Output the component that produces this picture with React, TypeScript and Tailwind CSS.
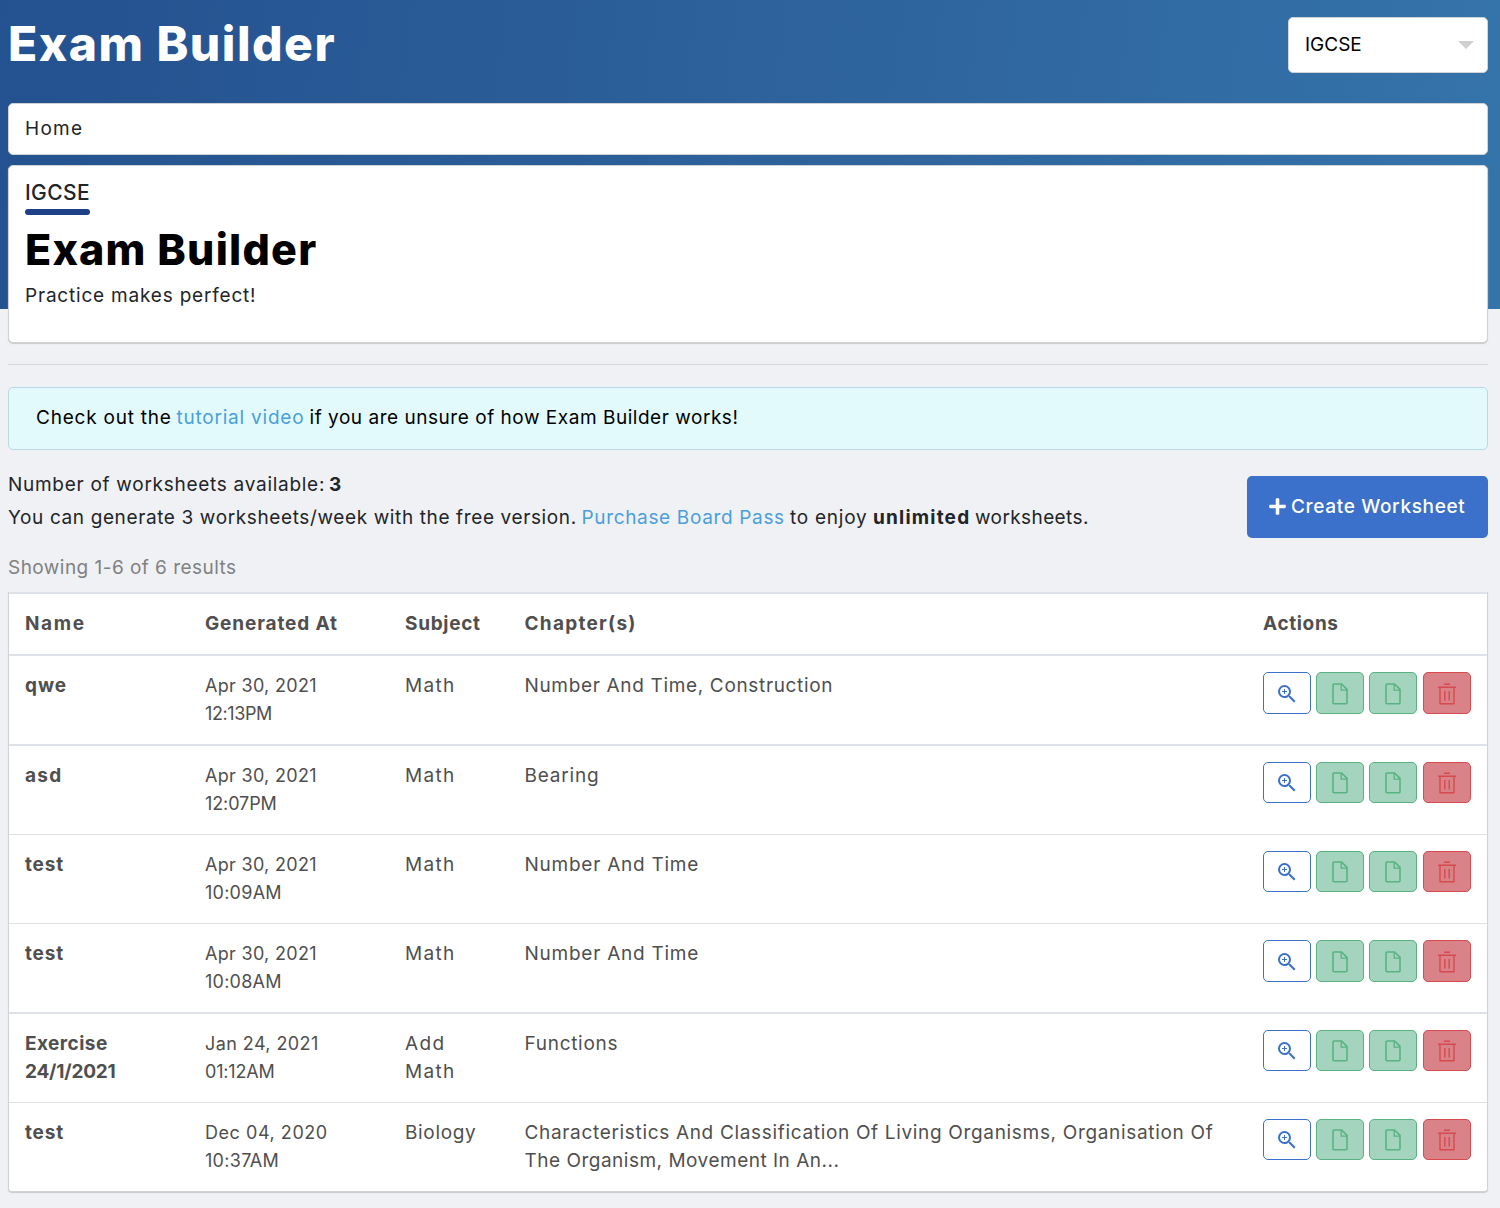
import { FaPlus } from 'react-icons/fa';
import { MdZoomIn } from 'react-icons/md';

type Piece = { text: string; track: string };
type Row = {
  name: Piece[];
  date: Piece[];
  subject: Piece[];
  chapters: Piece[];
  rowClass: string;
  buttonClass: string;
};

const APR: Piece = { text: 'Apr 30, 2021', track: 'tracking-[0.3px]' };
const MATH: Piece = { text: 'Math', track: 'tracking-[1.3px]' };
const TEST: Piece = { text: 'test', track: 'tracking-[0.8px]' };
const NUMBER_TIME: Piece = { text: 'Number And Time', track: 'tracking-[0.75px]' };

const THICK = 'h-[90px] border-t-2';
const THIN = 'h-[89px] border-t';
const TALL = 'h-[42px] pt-[2px]';
const SHORT = 'h-[41px] pt-px';

const rows: Row[] = [
  {
    name: [{ text: 'qwe', track: 'tracking-[0.9px]' }],
    date: [APR, { text: '12:13PM', track: 'tracking-[-0.4px]' }],
    subject: [MATH],
    chapters: [{ text: 'Number And Time, Construction', track: 'tracking-[0.66px]' }],
    rowClass: THICK,
    buttonClass: TALL,
  },
  {
    name: [{ text: 'asd', track: 'tracking-[1.3px]' }],
    date: [APR, { text: '12:07PM', track: 'tracking-[-0.1px]' }],
    subject: [MATH],
    chapters: [{ text: 'Bearing', track: 'tracking-[0.8px]' }],
    rowClass: THICK,
    buttonClass: SHORT,
  },
  {
    name: [TEST],
    date: [APR, { text: '10:09AM', track: 'tracking-[0.25px]' }],
    subject: [MATH],
    chapters: [NUMBER_TIME],
    rowClass: THIN,
    buttonClass: SHORT,
  },
  {
    name: [TEST],
    date: [APR, { text: '10:08AM', track: 'tracking-[0.25px]' }],
    subject: [MATH],
    chapters: [NUMBER_TIME],
    rowClass: THIN,
    buttonClass: TALL,
  },
  {
    name: [
      { text: 'Exercise', track: 'tracking-[0.45px]' },
      { text: '24/1/2021', track: 'tracking-[-0.2px]' },
    ],
    date: [
      { text: 'Jan 24, 2021', track: 'tracking-[0.42px]' },
      { text: '01:12AM', track: 'tracking-[-0.2px]' },
    ],
    subject: [{ text: 'Add', track: 'tracking-[1.4px]' }, MATH],
    chapters: [{ text: 'Functions', track: 'tracking-[0.7px]' }],
    rowClass: THICK,
    buttonClass: SHORT,
  },
  {
    name: [TEST],
    date: [
      { text: 'Dec 04, 2020', track: 'tracking-[0.55px]' },
      { text: '10:37AM', track: 'tracking-[0.3px]' },
    ],
    subject: [{ text: 'Biology', track: 'tracking-[0.65px]' }],
    chapters: [
      {
        text: 'Characteristics And Classification Of Living Organisms, Organisation Of',
        track: 'tracking-[0.67px]',
      },
      { text: 'The Organism, Movement In An...', track: 'tracking-[0.5px]' },
    ],
    rowClass: THIN,
    buttonClass: SHORT,
  },
];

function Lines({ pieces }: { pieces: Piece[] }) {
  return (
    <div>
      {pieces.map((p) => (
        <div key={p.text} className={`whitespace-nowrap ${p.track}`}>
          {p.text}
        </div>
      ))}
    </div>
  );
}

function FileIcon() {
  return (
    <svg width="16" height="22" viewBox="0 0 16 22" fill="none" stroke="currentColor" strokeWidth="1.6">
      <path d="M2 1h7.6l5.4 5.4v13.4a1 1 0 0 1-1 1H2a1 1 0 0 1-1-1V2a1 1 0 0 1 1-1z" strokeLinejoin="round" />
      <path d="M9.2 1.2v5.9h5.8" strokeWidth="1.3" />
    </svg>
  );
}

function TrashIcon() {
  return (
    <svg width="18" height="22" viewBox="0 0 18 22" fill="none" stroke="currentColor" strokeWidth="1.4">
      <path d="M6 1.2h6M0 4.3h18M6.8 8v9.4M11.2 8v9.4" />
      <path d="M2 4.3v16.5h14V4.3" strokeLinejoin="round" />
    </svg>
  );
}

function Actions({ size }: { size: string }) {
  const base = `flex w-12 items-center justify-center rounded-[5px] border ${size}`;
  const green = 'border-[#57b381] bg-[#a4d4bd] text-[#57b381]';
  return (
    <div className="flex">
      <button className={`${base} border-[#3b71ca] bg-white text-[#3b71ca]`}>
        <MdZoomIn size={24} />
      </button>
      <button className={`${base} ml-[5px] ${green}`}>
        <FileIcon />
      </button>
      <button className={`${base} ml-[5px] ${green}`}>
        <FileIcon />
      </button>
      <button className={`${base} ml-[6px] border-[#d64a50] bg-[#d98287] text-[#d64a50]`}>
        <TrashIcon />
      </button>
    </div>
  );
}

const GRID = 'grid grid-cols-[180px_200px_119.5px_738.5px_1fr] border-[#dee2e6] pl-4 pt-4';

export default function App() {
  return (
    <div className="h-[1208px] overflow-hidden bg-[#f0f1f5] bg-[linear-gradient(98deg,#24518f_0%,#2f669f_62%,#3574ab_100%)] bg-[length:100%_309px] bg-no-repeat px-2 pr-3 font-['Inter',sans-serif] text-[19px] leading-7 text-[#212529]">
      <header className="flex h-[103px] justify-between">
        <h1 className="mt-[10px] text-[48px] leading-[68px] font-extrabold tracking-[1.5px] whitespace-nowrap text-white">
          Exam Builder
        </h1>
        <div className="mt-[17px] flex h-14 w-[200px] items-center justify-between rounded-[5px] border border-[#d0d3d8] bg-white pr-[13px] pl-4 text-black">
          <span className="tracking-[0px]">IGCSE</span>
          <span className="h-0 w-0 border-x-8 border-t-8 border-x-transparent border-t-[#d0d0d0]" />
        </div>
      </header>

      <nav className="h-[52px] rounded-[5px] border border-[#d0d3d4] bg-white pt-[11px] pl-4 tracking-[1.3px]">Home</nav>

      <section className="mt-[10px] h-[178px] rounded-[5px] border border-[#d0d3d4] bg-white pl-4 shadow-[0_1px_1px_#c8caca]">
        <div className="mt-[11px] mb-px text-[21px] leading-[31px] font-medium tracking-[0.4px]">IGCSE</div>
        <div className="h-[6px] w-[65px] rounded-full bg-[#1d4086]" />
        <h2 className="mt-[4px] text-[43px] leading-[60px] font-extrabold tracking-[1.22px] whitespace-nowrap text-black">
          Exam Builder
        </h2>
        <p className="mt-[3px] tracking-[0.8px]">Practice makes perfect!</p>
      </section>

      <hr className="mt-[21px] border-[#d5d7db]" />

      <div className="mt-[22px] flex h-[63px] rounded-[5px] border border-[#b8daec] bg-[#e3fafc] pt-4 pl-[27px] whitespace-nowrap text-black">
        <span className="w-[140.5px] tracking-[0.78px]">Check out the</span>
        <a className="w-[133px] tracking-[0.78px] text-[#4a9fdb]">tutorial video</a>
        <span className="tracking-[0.53px]">if you are unsure of how Exam Builder works!</span>
      </div>

      <div className="mt-5 flex h-[83px] justify-between">
        <div className="whitespace-nowrap">
          <p className="flex h-[33px] pt-px">
            <span className="w-[321px] tracking-[0.72px]">Number of worksheets available:</span>
            <b>3</b>
          </p>
          <p className="flex pt-px">
            <span className="w-[573.5px] tracking-[0.62px]">You can generate 3 worksheets/week with the free version.</span>
            <a className="w-[208.5px] tracking-[0.66px] text-[#4a9fdb]">Purchase Board Pass</a>
            <span className="w-[83px] tracking-[0.75px]">to enjoy</span>
            <b className="w-[102px] tracking-[1.2px]">unlimited</b>
            <span className="tracking-[0.4px]">worksheets.</span>
          </p>
        </div>
        <button className="mt-[6px] flex h-[62px] w-[241px] items-center rounded-[5px] bg-[#3b71ca] pl-[21px] font-medium whitespace-nowrap text-white">
          <FaPlus size={19} className="-mt-[2px]" />
          <span className="ml-[4px] tracking-[0.66px]">Create Worksheet</span>
        </button>
      </div>

      <p className="h-[39px] pt-px tracking-[0.46px] text-[#808182]">Showing 1-6 of 6 results</p>

      <div className="h-[600px] rounded-b-[4px] border-x border-b border-[#d0d3d4] bg-white text-[#4f4f4f] shadow-[0_1px_1px_#c8caca]">
        <div className={`${GRID} h-[62px] border-t-2 font-bold`}>
          <span className="tracking-[1.6px]">Name</span>
          <span className="tracking-[0.86px]">Generated At</span>
          <span className="tracking-[0.7px]">Subject</span>
          <span className="tracking-[1.25px]">Chapter(s)</span>
          <span className="tracking-[0.64px]">Actions</span>
        </div>
        {rows.map((row, i) => (
          <div key={i} className={`${GRID} ${row.rowClass}`}>
            <div className="font-bold">
              <Lines pieces={row.name} />
            </div>
            <div className="text-lg leading-7">
              <Lines pieces={row.date} />
            </div>
            <Lines pieces={row.subject} />
            <Lines pieces={row.chapters} />
            <Actions size={row.buttonClass} />
          </div>
        ))}
      </div>
    </div>
  );
}
